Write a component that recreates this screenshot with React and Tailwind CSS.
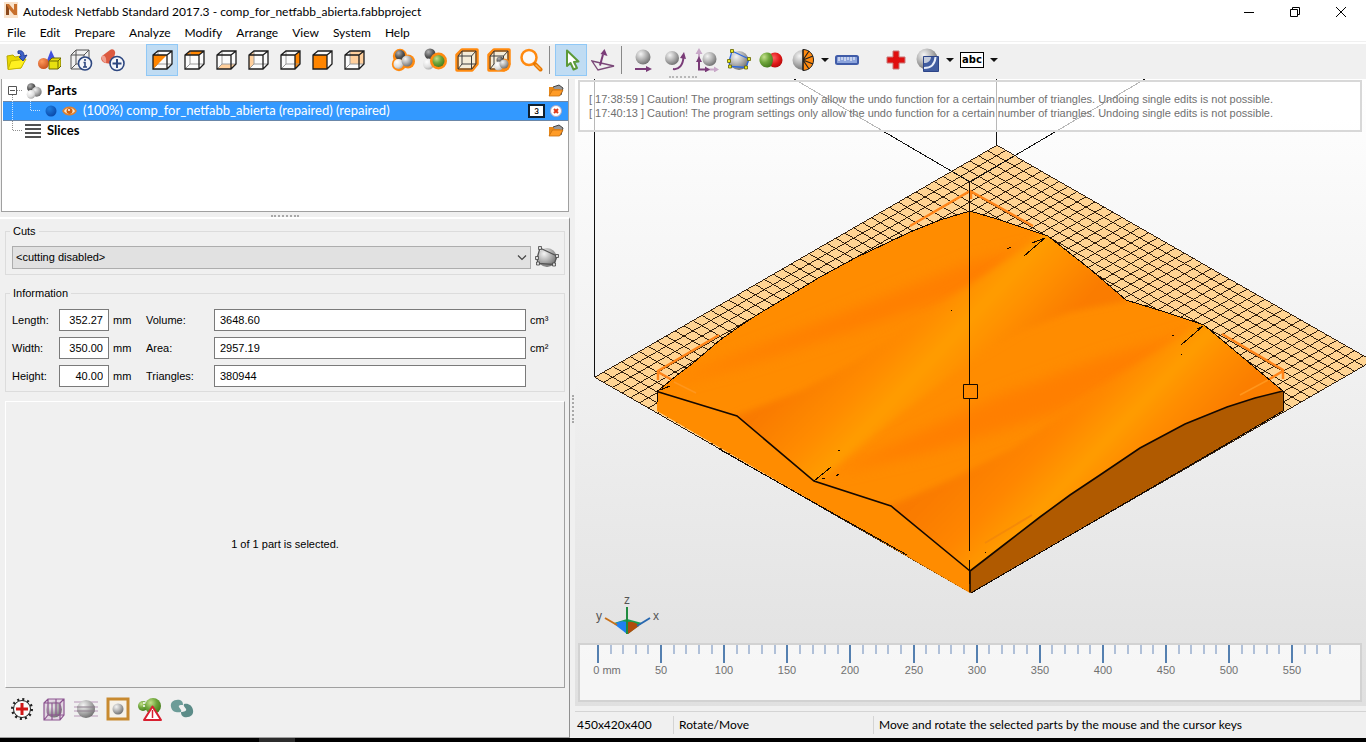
import { useState } from "react";

const menus = ["File", "Edit", "Prepare", "Analyze", "Modify", "Arrange", "View", "System", "Help"];

const messages = [
  "[ 17:38:59 ] Caution! The program settings only allow the undo function for a certain number of triangles. Undoing single edits is not possible.",
  "[ 17:40:13 ] Caution! The program settings only allow the undo function for a certain number of triangles. Undoing single edits is not possible.",
];

// gradients shared by all the icons
function IconDefs() {
  return (
    <svg className="absolute w-0 h-0" aria-hidden="true">
      <defs>
        <radialGradient id="ball" cx="0.35" cy="0.3" r="0.75">
          <stop offset="0" stopColor="#f4f4f4" />
          <stop offset="0.5" stopColor="#b4b4b4" />
          <stop offset="1" stopColor="#6e6e6e" />
        </radialGradient>
        <radialGradient id="ballDark" cx="0.35" cy="0.3" r="0.75">
          <stop offset="0" stopColor="#b0b0b0" />
          <stop offset="0.6" stopColor="#555" />
          <stop offset="1" stopColor="#333" />
        </radialGradient>
        <radialGradient id="ballLight" cx="0.35" cy="0.3" r="0.8">
          <stop offset="0" stopColor="#fff" />
          <stop offset="0.6" stopColor="#dedede" />
          <stop offset="1" stopColor="#a0a0a0" />
        </radialGradient>
        <radialGradient id="ballGreen" cx="0.35" cy="0.3" r="0.75">
          <stop offset="0" stopColor="#c4e08c" />
          <stop offset="0.5" stopColor="#6fa63c" />
          <stop offset="1" stopColor="#447a1c" />
        </radialGradient>
        <radialGradient id="ballRed" cx="0.4" cy="0.35" r="0.7">
          <stop offset="0" stopColor="#ff6060" />
          <stop offset="0.6" stopColor="#e01818" />
          <stop offset="1" stopColor="#b00808" />
        </radialGradient>
        <radialGradient id="ballOrange" cx="0.35" cy="0.3" r="0.75">
          <stop offset="0" stopColor="#ff9a5c" />
          <stop offset="1" stopColor="#c8501c" />
        </radialGradient>
        <radialGradient id="ballBlue" cx="0.35" cy="0.3" r="0.75">
          <stop offset="0" stopColor="#1f7ee0" />
          <stop offset="1" stopColor="#0a48a8" />
        </radialGradient>
      </defs>
    </svg>
  );
}

function Icon({ children, className = "w-6 h-6" }) {
  return (
    <svg viewBox="0 0 24 24" className={className} fill="none" aria-hidden="true">
      {children}
    </svg>
  );
}

const cubeFaces = {
  half: <path d="M3 7h14l-14 14z" fill="#ff8500" />,
  top: <path d="M3 7l5-4h14l-5 4z" fill="#ff8500" />,
  bottom: <path d="M3 21l5-5h14l-5 5z" fill="#ffcf9c" />,
  left: <path d="M3 7l5-4v13l-5 5z" fill="#ffcf9c" />,
  right: <path d="M17 7l5-4v13l-5 5z" fill="#ff8500" />,
  front: <path d="M3 7h14v14H3z" fill="#ff8500" />,
  back: <path d="M8 3h14v13H8z" fill="#ffcf9c" />,
};

function Cube({ face }) {
  return (
    <Icon>
      <path d="M3 7l5-4h14v13l-5 5H3z" fill="#fbfbfb" />
      {face !== "front" && face !== "half" && cubeFaces[face]}
      {face !== "front" && <path d="M8 3v13h14M8 16l-5 5" stroke="#9a9a9a" />}
      {(face === "front" || face === "half") && cubeFaces[face]}
      <path d="M3 7l5-4h14v13l-5 5H3zM3 7h14v14M17 7l5-4" stroke="#1c1c1c" strokeWidth="1.300" />
    </Icon>
  );
}

function OpenIcon() {
  return (
    <Icon>
      <path d="M2 8l6-1 2 2 6-1v4l4-1-4 9-13 1z" fill="#e8d800" stroke="#b8a800" />
      <path d="M6 13l15-2-5 9-13 1.500z" fill="#fff020" stroke="#c8b800" />
      <path d="M13 3c4-1 6 1 6 5l3-1-4 6-4-4 2-.5c0-2-1-3.500-3-3z" fill="#3f62c8" stroke="#223c98" />
    </Icon>
  );
}

function ShapesIcon() {
  return (
    <Icon>
      <path d="M14 2l6 13H9z" fill="#4050e0" />
      <circle cx="6.500" cy="15.500" r="5.500" fill="url(#ballOrange)" />
      <path d="M12 13l3-3h9v8l-3 3h-9z" fill="#e8e010" stroke="#6c6800" />
      <path d="M12 13h9v8M21 13l3-3" stroke="#6c6800" />
    </Icon>
  );
}

function InfoBoxIcon() {
  return (
    <Icon>
      <path d="M2 7l5-5h13v14l-5 5H2zM7 2v14h13M7 16l-5 5M2 7h13v13M15 7l5-5" stroke="#555" />
      <circle cx="16" cy="15.500" r="6.500" fill="#f4f6fa" stroke="#2d4780" strokeWidth="1.600" />
      <path d="M16 11v2M14.500 14.500H16v4.500M14 19h4" stroke="#2d4780" strokeWidth="1.600" />
    </Icon>
  );
}

function AddPartIcon() {
  return (
    <Icon>
      <path d="M1 8l8-6c3-2 6 1 5 4l-3 10-7-1c-3-1-5-4-3-7z" fill="#dc5a40" />
      <path d="M1 8c2-2 5 1 4 7-3-1-5-4-4-7z" fill="#f0a090" />
      <circle cx="16" cy="15.500" r="7" fill="#f4f6fa" stroke="#2d4780" strokeWidth="1.600" />
      <path d="M16 11v9M11.500 15.500h9" stroke="#2d4780" strokeWidth="2" />
    </Icon>
  );
}

function AllPartsIcon() {
  return (
    <Icon>
      <g fill="#ff8a10">
        <circle cx="9" cy="8" r="7.200" />
        <circle cx="8" cy="16" r="7.200" />
        <circle cx="17" cy="13.500" r="7" />
      </g>
      <circle cx="9" cy="7" r="5" fill="url(#ballDark)" />
      <circle cx="7.500" cy="16" r="5" fill="url(#ballLight)" />
      <circle cx="16" cy="13" r="5.500" fill="url(#ball)" />
    </Icon>
  );
}

function OnePartIcon() {
  return (
    <Icon>
      <circle cx="7" cy="6" r="5.500" fill="url(#ballDark)" />
      <circle cx="5.500" cy="16" r="5.500" fill="url(#ballLight)" />
      <circle cx="15.500" cy="13" r="8.500" fill="#ff8a10" />
      <circle cx="15.500" cy="13" r="6" fill="url(#ballGreen)" />
    </Icon>
  );
}

function FitBoxIcon({ ball }) {
  return (
    <Icon>
      <path d="M2 7l5-5h15v14l-5 6H2z" stroke="#ff8a10" strokeWidth="3.500" strokeLinejoin="round" fill="#f4ecd8" />
      <path d="M3 8l4-5h14v13l-4 5H3zM3 8h13.500v13M16.500 8l4.500-5M7 3v13h14M7 16l-4 5" stroke="#3c3c3c" />
      {ball && (
        <>
          <circle cx="17" cy="17" r="6.500" fill="#ff8a10" />
          <circle cx="13" cy="12" r="3.500" fill="url(#ballDark)" />
          <circle cx="11.500" cy="18" r="4.500" fill="url(#ballLight)" />
          <circle cx="17" cy="16" r="4.500" fill="url(#ball)" />
        </>
      )}
    </Icon>
  );
}

function SearchIcon() {
  return (
    <Icon>
      <circle cx="10" cy="9.500" r="7.500" stroke="#ff8a10" strokeWidth="2.500" fill="#fafafa" />
      <path d="M16 16l5.500 5.500" stroke="#e87800" strokeWidth="4" strokeLinecap="round" />
      <path d="M17 17l4 4" stroke="#ffb050" strokeWidth="1.500" strokeLinecap="round" />
    </Icon>
  );
}

function PointerIcon() {
  return (
    <Icon>
      <path d="M8 2.500v15.500l3.500-3 3 6.500 3.500-1.500-3-6 4.500-.5z" fill="#fff" stroke="#5c9a38" strokeWidth="2" strokeLinejoin="round" />
    </Icon>
  );
}

function AlignIcon() {
  return (
    <Icon>
      <path d="M1 13l22 5-16 4z" stroke="#7a4878" strokeWidth="1.300" />
      <path d="M9 17.500l3-11" stroke="#7a3c78" strokeWidth="2" />
      <path d="M13.500 1l3 7-7-2z" fill="#7a3c78" />
    </Icon>
  );
}

function MoveIcon() {
  return (
    <Icon>
      <circle cx="12" cy="9" r="7.500" fill="url(#ball)" />
      <path d="M4 21h13" stroke="#7a3c78" strokeWidth="2" />
      <path d="M15 18l6 3-6 3z" fill="#7a3c78" />
    </Icon>
  );
}

function RotateIcon() {
  return (
    <Icon>
      <circle cx="9" cy="10" r="7" fill="url(#ball)" />
      <path d="M10 21c6 1 10-4 10.500-12" stroke="#7a3c78" strokeWidth="2" />
      <path d="M17 10l4-6 2 7z" fill="#7a3c78" />
    </Icon>
  );
}

function ScaleIcon() {
  return (
    <Icon>
      <path d="M4 4v8M12 21.500h8" stroke="#c8a8c8" strokeWidth="2" />
      <path d="M4 0l3.500 6h-7zM24 21.500l-5-3v6z" fill="#c8a8c8" />
      <circle cx="14.500" cy="11" r="7" fill="url(#ball)" />
      <path d="M4 11v10.500h8" stroke="#7a3c78" strokeWidth="2" />
      <path d="M4 8l3 6H1zM15 21.500l-5-3v6z" fill="#7a3c78" />
    </Icon>
  );
}

function CutIcon({ muted }) {
  const line = muted ? "#555" : "#2a68e0";
  const dot = muted ? "#ddd" : "#e8e820";
  return (
    <Icon>
      <circle cx="12" cy="12.500" r="9.500" fill="url(#ball)" />
      <path d="M5 3l17 8-3 8.500-16-1-1-5z" stroke={line} strokeWidth="1.300" />
      <g fill={dot} stroke={muted ? "#444" : "#606000"} strokeWidth="0.800">
        <path d="M3.500 1.500h3v3h-3zM20.500 9.500h3v3h-3zM17.500 18h3v3h-3zM1.500 17h3v3h-3zM.5 11.500h3v3h-3z" />
      </g>
    </Icon>
  );
}

function BooleanIcon() {
  return (
    <Icon>
      <circle cx="16" cy="12" r="7.500" fill="url(#ballRed)" />
      <path d="M8 4.500a7.500 7.500 0 1 0 4 13.800 12 12 0 0 0 0-12.600 7.500 7.500 0 0 0-4-1.200z" fill="url(#ballGreen)" />
    </Icon>
  );
}

function RepairMeshIcon() {
  return (
    <Icon>
      <circle cx="11.500" cy="12" r="10" fill="url(#ball)" />
      <path d="M12 1.500c6 0 10.500 4.500 10.500 10.500S18 22.500 12 22.500z" fill="#ff8a10" stroke="#222" />
      <path d="M12 12l6-9M12 12l10-4M12 12l10 4M12 12l6 9M12 1.500v21" stroke="#222" strokeWidth="1.200" />
    </Icon>
  );
}

function RulerIcon() {
  return (
    <Icon>
      <rect x="1" y="8" width="22" height="8" rx="1.500" fill="#8ca4dc" stroke="#405ca8" strokeWidth="2" />
      <path d="M4 9v4M7 9v3M10 9v4M13 9v3M16 9v4M19 9v3" stroke="#fff" />
    </Icon>
  );
}

function PlusIcon() {
  return (
    <Icon>
      <path d="M9 3h6v6h6v6h-6v6H9v-6H3V9h6z" fill="#e01010" stroke="#c87878" />
    </Icon>
  );
}

function OffsetIcon() {
  return (
    <Icon>
      <circle cx="11" cy="11" r="10.500" fill="url(#ball)" />
      <path d="M7.500 8.500h15v15h-15z" fill="#405ca0" stroke="#2c4488" />
      <path d="M8 20c7 0 11-4 11.500-11" stroke="#e8eefa" strokeWidth="2" />
      <path d="M8 9h7c-.5 4-3 6-7 6z" fill="#c4ccdc" />
    </Icon>
  );
}

function SupportIcon() {
  return (
    <Icon className="w-4 h-4">
      <circle cx="8" cy="7" r="6.500" fill="url(#ballDark)" />
      <circle cx="16" cy="13" r="7.500" fill="url(#ball)" />
      <circle cx="7.500" cy="17" r="6.500" fill="url(#ballLight)" />
    </Icon>
  );
}

function FolderIcon() {
  return (
    <svg viewBox="0 0 16 14" className="w-4 h-[14px]" aria-hidden="true">
      <path d="M5 3l6-2 4 3-2 7-6-3z" fill="#999" stroke="#444" />
      <path d="M1 3h4l1.500 2H12v7H1z" fill="#e88818" />
      <path d="M1 12l3.500-6H15l-3.500 6z" fill="#ff9c28" stroke="#c87010" strokeWidth="0.800" />
    </svg>
  );
}

function Drop({ label }) {
  return (
    <button type="button" aria-label={label} className="w-3 h-8 flex items-center justify-center">
      <svg viewBox="0 0 8 4" className="w-2 h-1" aria-hidden="true">
        <path d="M0 0h8L4 4z" fill="#111" />
      </svg>
    </button>
  );
}

function Tool({ label, active, onClick, children }) {
  return (
    <button
      type="button"
      aria-label={label}
      onClick={onClick}
      className={
        "w-8 h-8 shrink-0 flex items-center justify-center border " +
        (active ? "bg-[#c0dcf3] border-[#90c8f6]" : "border-transparent")
      }
    >
      {children}
    </button>
  );
}

function Toolbar() {
  const [view, setView] = useState("half");
  const [tool, setTool] = useState("pointer");

  return (
    <div className="h-[37px] shrink-0 flex items-center bg-[#f0f0f0] border-t-2 border-white pl-px pb-1">
      <Tool label="Open"><OpenIcon /></Tool>
      <Tool label="Add primitives"><ShapesIcon /></Tool>
      <Tool label="Platform info"><InfoBoxIcon /></Tool>
      <Tool label="Add part"><AddPartIcon /></Tool>

      <div className="flex mx-[17px]">
        {Object.keys(cubeFaces).map((face) => (
          <Tool key={face} label={"View " + face} active={view === face} onClick={() => setView(face)}>
            <Cube face={face} />
          </Tool>
        ))}
      </div>

      <Tool label="Zoom to all"><AllPartsIcon /></Tool>
      <Tool label="Zoom to selected"><OnePartIcon /></Tool>
      <Tool label="Zoom to platform"><FitBoxIcon /></Tool>
      <Tool label="Zoom to platform and parts"><FitBoxIcon ball /></Tool>
      <Tool label="Zoom"><SearchIcon /></Tool>

      <div className="w-px h-7 ml-[2px] mr-[5px] bg-[#888]" />
      <Tool label="Select" active={tool === "pointer"} onClick={() => setTool("pointer")}><PointerIcon /></Tool>
      <Tool label="Align" active={tool === "align"} onClick={() => setTool("align")}><AlignIcon /></Tool>
      <div className="w-px h-7 ml-[2px] mr-[5px] bg-[#888]" />

      <Tool label="Move"><MoveIcon /></Tool>
      <div className="relative">
        <Tool label="Rotate"><RotateIcon /></Tool>
        <div className="absolute left-[10px] top-full w-7 border-t-2 border-dotted border-[#b8b8b8]" />
      </div>
      <Tool label="Scale"><ScaleIcon /></Tool>
      <Tool label="Free cut"><CutIcon /></Tool>
      <Tool label="Boolean"><BooleanIcon /></Tool>
      <Tool label="Mesh"><RepairMeshIcon /></Tool>
      <Drop label="Mesh options" />
      <Tool label="Measure"><RulerIcon /></Tool>
      <div className="w-[17px]" />
      <Tool label="Repair"><PlusIcon /></Tool>
      <Tool label="Shell"><OffsetIcon /></Tool>
      <Drop label="Shell options" />
      <button type="button" className="w-6 h-4 mx-1 flex items-center justify-center border border-black bg-white font-['DejaVu_Sans'] text-[10px] leading-3 font-bold">
        abc
      </button>
      <Drop label="Label options" />
    </div>
  );
}

function TitleBar() {
  return (
    <header className="shrink-0 h-[22px] flex items-center pl-1 pt-px text-[12px]">
      <svg viewBox="0 0 14 16" className="w-[14px] h-4 mr-[5px] mb-1" aria-hidden="true">
        <path d="M0 0h14v16H0z" fill="#f9e3cc" />
        <path d="M2 13V2h3l5 6V2h3v11h-3L5 7v6z" fill="#c8702c" />
        <path d="M2 13V2l3 5v6z" fill="#8c4a1c" />
      </svg>
      <h1 className="grow whitespace-nowrap">Autodesk Netfabb Standard 2017.3 - comp_for_netfabb_abierta.fabbproject</h1>
      <button type="button" aria-label="Minimize" className="w-[46px] h-full flex items-center justify-center">
        <svg viewBox="0 0 10 10" className="w-[10px] h-[10px]"><path d="M0 5.500h10" stroke="#000" /></svg>
      </button>
      <button type="button" aria-label="Restore" className="w-[46px] h-full flex items-center justify-center">
        <svg viewBox="0 0 10 10" className="w-[10px] h-[10px]" fill="none">
          <path d="M.5 2.500h7v7h-7zM2.500 2.500v-2h7v7h-2" stroke="#000" />
        </svg>
      </button>
      <button type="button" aria-label="Close" className="w-[46px] h-full mr-[2px] flex items-center justify-center">
        <svg viewBox="0 0 10 10" className="w-[10px] h-[10px]"><path d="M0 0l10 10M10 0L0 10" stroke="#000" /></svg>
      </button>
    </header>
  );
}

function PartsTree() {
  return (
    <div className="h-[133px] shrink-0 mx-px bg-white border-l border-b border-r border-[#a0a0a0] pt-[2px] text-[13px]">
      <div className="h-5 flex items-center pr-1">
        <svg viewBox="0 0 22 20" className="w-[22px] h-5 mr-[2px]" fill="none" aria-hidden="true">
          <path d="M10.500 14v6M15 9.500h5" stroke="#909090" strokeDasharray="1 1" />
          <path d="M6.500 5.500h8v8h-8zM8 9.500h5" stroke="#555" />
        </svg>
        <SupportIcon />
        <span className="grow ml-[5px] font-bold">Parts</span>
        <button type="button" aria-label="Open parts"><FolderIcon /></button>
      </div>

      <div className="h-5 flex items-center pr-1 ml-px bg-[#3399ff] border-y border-[#6b87a8] text-white">
        <svg viewBox="0 0 42 20" className="w-[42px] h-5" fill="none" aria-hidden="true">
          <path d="M9.500 0v20M27.500 0v9.500h10" stroke="#cfe4fa" strokeDasharray="1 1" />
        </svg>
        <svg viewBox="0 0 32 12" className="w-8 h-3" fill="none" aria-hidden="true">
          <circle cx="6" cy="6" r="5.500" fill="url(#ballBlue)" />
          <path d="M18 6c3-5 10-5 13 0-3 5-10 5-13 0z" fill="#ffe8c8" stroke="#e08030" strokeWidth="1.500" />
          <circle cx="24.500" cy="6" r="3" fill="#d06010" />
          <circle cx="24" cy="5" r="1" fill="#fff" />
        </svg>
        <span className="grow ml-[6px] whitespace-nowrap">(100%) comp_for_netfabb_abierta (repaired) (repaired)</span>
        <span className="w-[17px] h-[14px] mr-[3px] border-2 border-[#102030] bg-white text-black text-[8px] leading-[10px] text-center font-bold">3</span>
        <button type="button" aria-label="Remove part" className="w-4 flex justify-center">
          <svg viewBox="0 0 12 12" className="w-3 h-3" aria-hidden="true">
            <circle cx="6" cy="6" r="5.500" fill="#fff" stroke="#b0a8c0" />
            <path d="M4 4l4 4M8 4L4 8" stroke="#e03818" strokeWidth="2" />
          </svg>
        </button>
      </div>

      <div className="h-5 flex items-center pr-1">
        <svg viewBox="0 0 22 20" className="w-[22px] h-5 mr-px" fill="none" aria-hidden="true">
          <path d="M10.500 0v9.500h10" stroke="#909090" strokeDasharray="1 1" />
        </svg>
        <svg viewBox="0 0 16 14" className="w-4 h-[14px]" shapeRendering="crispEdges" aria-hidden="true">
          <path d="M0 1h16M0 5h16M0 9h16M0 13h16" stroke="#505050" strokeWidth="2" />
        </svg>
        <span className="grow ml-[6px] font-bold">Slices</span>
        <button type="button" aria-label="Open slices"><FolderIcon /></button>
      </div>
    </div>
  );
}

const rows = [
  { id: "length", label: "Length:", value: "352.27", id2: "volume", label2: "Volume:", value2: "3648.60", unit: "cm³" },
  { id: "width", label: "Width:", value: "350.00", id2: "area", label2: "Area:", value2: "2957.19", unit: "cm²" },
  { id: "height", label: "Height:", value: "40.00", id2: "triangles", label2: "Triangles:", value2: "380944", unit: "" },
];

function InfoPanel() {
  const field = "h-[22px] border border-[#7a7a7a] bg-white px-[5px] text-[11px]";
  return (
    <div className="grow flex flex-col border-t-2 border-t-white border-r border-r-[#909090] pl-[5px] pr-1 pb-1 font-['Liberation_Sans',Arial,sans-serif] text-[11px]">
      <fieldset className="mt-[5px] h-[51px] border border-[#dcdcdc] px-[6px]">
        <legend className="ml-[-2px] px-[3px] leading-[14px]">Cuts</legend>
        <div className="flex items-center mt-[7px]">
          <div className="grow relative">
            <select aria-label="Cuts" className="w-full h-[23px] appearance-none border border-[#adadad] bg-[#e1e1e1] pl-[3px]">
              <option>&lt;cutting disabled&gt;</option>
            </select>
            <svg viewBox="0 0 10 6" className="absolute right-[4px] top-[9px] w-[10px] h-[6px] pointer-events-none" fill="none">
              <path d="M1 .5l4 4 4-4" stroke="#444" strokeWidth="1.200" />
            </svg>
          </div>
          <button type="button" aria-label="Edit cut" className="ml-1 mr-[-1px]"><CutIcon muted /></button>
        </div>
      </fieldset>

      <fieldset className="mt-[11px] h-[106px] border border-[#dcdcdc] pl-[6px] pr-[38px]">
        <legend className="ml-[-2px] px-[3px] leading-[14px]">Information</legend>
        <div className="mt-[9px] flex flex-col gap-[6px]">
          {rows.map((r) => (
            <div key={r.id} className="flex items-center">
              <label htmlFor={r.id} className="w-[47px]">{r.label}</label>
              <input id={r.id} readOnly value={r.value} className={field + " w-[50px] text-right"} />
              <span className="w-[37px] pl-1">mm</span>
              <label htmlFor={r.id2} className="w-[68px]">{r.label2}</label>
              <input id={r.id2} readOnly value={r.value2} className={field + " grow"} />
              <span className="w-[22px] pl-1 mr-[-22px]">{r.unit}</span>
            </div>
          ))}
        </div>
      </fieldset>

      <div className="grow mt-[9px] flex items-center justify-center border border-white border-r-[#a0a0a0] border-b-[#a0a0a0]">
        1 of 1 part is selected.
      </div>

      <div className="h-[45px] shrink-0 flex items-center gap-2 pl-[5px] pb-1">
        <button type="button" aria-label="Repair"><Icon>
          <circle cx="12" cy="12" r="9.500" stroke="#222" strokeWidth="3" strokeDasharray="2 2.970" />
          <circle cx="12" cy="12" r="8.500" stroke="#222" fill="#fafafa" />
          <path d="M12 6v12M6 12h12" stroke="#d01818" strokeWidth="3" />
        </Icon></button>
        <button type="button" aria-label="Bounding box"><Icon>
          <path d="M2 6l4-4h16v16l-4 5H2z" fill="#e2d6e2" />
          <circle cx="12" cy="12.500" r="8" fill="url(#ball)" />
          <path d="M2 6l4-4h16v16l-4 5H2zM2 6h16v17M18 6l4-4M6 2v16h16M6 18l-4 5M10 6v17M14 2v16" stroke="#8c5490" strokeWidth="1.200" />
        </Icon></button>
        <button type="button" aria-label="Slices"><Icon>
          <path d="M0 5h24M0 10h24M0 14h24M0 19h24" stroke="#b898b8" />
          <circle cx="12" cy="12" r="9" fill="url(#ball)" />
          <path d="M3 10h18M3 14h18" stroke="#8a7c8a" />
        </Icon></button>
        <button type="button" aria-label="Platform"><Icon>
          <path d="M2 2h20v20H2z" stroke="#c88a30" strokeWidth="3" fill="#f6f2ea" />
          <circle cx="12" cy="12" r="5.500" fill="url(#ball)" />
        </Icon></button>
        <button type="button" aria-label="Collisions"><Icon>
          <circle cx="5" cy="9" r="5" fill="url(#ballGreen)" />
          <path d="M5 6h4M5 9h3" stroke="#fff" strokeWidth="1.500" />
          <circle cx="15" cy="9" r="8" fill="url(#ballGreen)" />
          <path d="M14.500 9.500L23 23H6z" fill="#fff" stroke="#d82030" strokeWidth="2" strokeLinejoin="round" />
          <path d="M14.500 13v8" stroke="#d82030" strokeWidth="1.500" />
        </Icon></button>
        <button type="button" aria-label="Link"><Icon>
          <path d="M10 3C4 2 0 5 1 10s6 6 10 5c1-2-1-3-2-5s2-2 4-2c0-3-1-4-3-5z" fill="#6c9c98" />
          <path d="M14 20c6 1 10-2 9-7s-5-7-9-6c-1 2 1 3 2 5s-2 3-5 3c0 3 1 4 3 5z" fill="#5c8c88" />
        </Icon></button>
      </div>
    </div>
  );
}

// build platform: 45 x 42 cells, top corner is the origin
const top = [996.5, 145.5];
const u = [-8.93, 5.15];
const v = [8.95, 5.13];
const at = (a, b) => `${top[0] + u[0] * a + v[0] * b} ${top[1] + u[1] * a + v[1] * b}`;
const gridLines = [];
for (let i = 0; i <= 45; i++) gridLines.push(`M${at(i, 0)}L${at(i, 42)}`);
for (let j = 0; j <= 42; j++) gridLines.push(`M${at(0, j)}L${at(45, j)}`);

const backEdge =
  "M657 391.500L676 376L693 363L720 340L740 326L760 313L787 297L820 277L857 257L887 243L910 232L940 220L970 211L997 219L1048 236L1090 269L1126 300L1165 312L1204 325L1283 391";
const frontEdge = "L1255 398L1227 407L1185 424L1140 448L1100 475L1070 495L1040 517L1005 544L970 571";
const surface = backEdge + frontEdge + "L891 506L814 481L737 416Z";

function Scene() {
  return (
    <svg viewBox="575 79 791 627" preserveAspectRatio="xMinYMin slice" className="absolute inset-0 w-full h-full" fill="none" role="img" aria-label="Platform with part">
      <defs>
        <clipPath id="surface"><path d={surface} /></clipPath>
        <filter id="soft" x="-20%" y="-20%" width="140%" height="140%"><feGaussianBlur stdDeviation="7" /></filter>
        <filter id="softer" x="-20%" y="-20%" width="140%" height="140%"><feGaussianBlur stdDeviation="3" /></filter>
        <linearGradient id="fold1" gradientUnits="userSpaceOnUse" x1="868" y1="298" x2="984" y2="408">
          <stop offset="0" stopColor="#f97a00" />
          <stop offset="0.350" stopColor="#ff8c00" />
          <stop offset="0.550" stopColor="#ff9c00" />
          <stop offset="0.720" stopColor="#ff9000" />
          <stop offset="1" stopColor="#fa7b00" />
        </linearGradient>
        <linearGradient id="fold2" gradientUnits="userSpaceOnUse" x1="1024" y1="388" x2="1140" y2="498">
          <stop offset="0" stopColor="#f97a00" />
          <stop offset="0.350" stopColor="#ff8600" />
          <stop offset="0.600" stopColor="#ff9c00" />
          <stop offset="0.750" stopColor="#ff8e00" />
          <stop offset="1" stopColor="#fb7e00" />
        </linearGradient>
      </defs>

      <path d={`M${at(0, 0)}L${at(45, 0)}L${at(45, 42)}L${at(0, 42)}Z`} fill="#ffd493" />
      <path d={gridLines.join("")} stroke="#1c0c00" strokeWidth="0.900" shapeRendering="crispEdges" />
      <path d="M594.500 79V377M996.500 79V145M794 79L970 182L1145 79" stroke="#111" shapeRendering="crispEdges" />

      <g stroke="#ff8418" strokeWidth="2.500">
        <path d="M910 226L970 191L1033 226M971 191v8" />
        <path d="M719 335L658 371v9M658 372l16 9" />
        <path d="M1222 334L1283 370v9M1283 371l-15 9" />
      </g>

      <path d={surface} fill="#ff8c00" />
      <g clipPath="url(#surface)">
        <g filter="url(#soft)">
          <path d="M1048 244L970 262L850 310L655 388L740 366L860 328L985 286Z" fill="#ff7f00" />
          <path d="M1200 330L1100 358L1000 395L830 474L930 452L1060 412Z" fill="#ff7f00" />
        </g>
        <g filter="url(#softer)">
          <path d="M730 418L803 390L853 363L903 330L970 285L1048 230L1130 300L1070 312L1020 332L970 362L900 414L812 486Z" fill="url(#fold1)" />
          <path d="M885 508L950 480L1010 450L1090 396L1204 320L1290 391L1185 435L1040 530L970 580Z" fill="url(#fold2)" />
        </g>
        <path d="M1032 515L985 543" stroke="#f58a08" strokeWidth="2" />
        <path d="M674 382l22 11M1268 380l-28 15" stroke="#ff961c" strokeWidth="1.500" />
      </g>

      <path d="M657 391.500L737 416L814 481L891 506L970 571V593L657 411Z" fill="#ff8c00" />
      <path d={"M1283 391" + frontEdge + "V593L1283 411Z"} fill="#b05a00" />

      <g stroke="#140800" shapeRendering="crispEdges">
        <path d={backEdge + "V411"} />
        <path d="M657.500 391v11M719 449L907 555M971 593L1283 411" />
        <path d="M969.500 182V551M969.500 560V584" />
        <path d="M1045 238L1024 256M1045 238l-13 5M1011 247l-4 2M1203 326L1181 345M1203 326l-6 3M814 481L831 467M822 479l3-1M836 476l3-2M838 451l2-1M660 390l10-4M951 310h1M1172 335h2M1181 354h1M985 552h1" />
      </g>
      <path d={"M657 391.500L737 416L814 481L891 506L970 571M1283 391" + frontEdge + "V592"} stroke="#140800" strokeWidth="1.600" />
      <path d="M963.500 384.500h14v14h-14z" stroke="#140800" fill="#ff8a00" />

      {/* axis cross */}
      <path d="M614 623l13-4 15 4-14 11z" fill="#18a050" />
      <path d="M614 624q6-4 13-2v12z" fill="#2080f0" />
      <path d="M627 622q8-1 12 4l-11 8z" fill="#b04c0c" />
      <path d="M627 607V634" stroke="#208c40" strokeWidth="2" />
      <path d="M605 618l12 7" stroke="#c87018" strokeWidth="2" />
      <path d="M650 618l-13 8" stroke="#2868b0" strokeWidth="2" />
      <g fill="#555" className="font-['Liberation_Sans',Arial,sans-serif] text-[12px]" textAnchor="middle">
        <text x="627" y="604">z</text>
        <text x="599" y="620">y</text>
        <text x="656" y="620">x</text>
      </g>
    </svg>
  );
}

function Ruler() {
  const ticks = Array.from({ length: 59 }, (_, i) => i);
  return (
    <div className="absolute left-[3px] right-1 bottom-1 h-[59px] border-2 border-[#d2d2d2] bg-white/70 overflow-hidden">
      <svg className="w-full h-full" shapeRendering="crispEdges" role="img" aria-label="Scale in millimetres">
        {ticks.map((i) => {
          const x = Math.round(18 + i * 12.62);
          return i % 5 === 0 ? (
            <path key={i} d={`M${x} 0v18`} stroke="#5580b0" strokeWidth="2" />
          ) : (
            <path key={i} d={`M${x} 0v9`} stroke="#b0c0d8" strokeWidth="2" />
          );
        })}
        <g fill="#707070" textAnchor="middle" className="font-['Liberation_Sans',Arial,sans-serif] text-[11px]">
          {ticks.filter((i) => i % 5 === 0).map((i) => (
            <text key={i} x={i === 0 ? 27 : Math.round(18 + i * 12.62)} y="29">
              {i === 0 ? "0 mm" : i * 10}
            </text>
          ))}
        </g>
      </svg>
    </div>
  );
}

export default function App() {
  return (
    <div className="h-screen flex flex-col overflow-hidden bg-white text-black font-['Lato','Open_Sans',sans-serif]">
      <IconDefs />
      <TitleBar />

      <nav className="shrink-0 h-[20px] flex items-center gap-[14px] pl-[7px] pt-[2px] text-[12px] border-b border-[#f0f0f0]">
        {menus.map((m) => (
          <button key={m} type="button">{m}</button>
        ))}
      </nav>

      <Toolbar />

      <div className="grow min-h-0 flex bg-[#f0f0f0]">
        <aside className="w-[570px] shrink-0 flex flex-col border-b border-[#a0a0a0]">
          <PartsTree />
          <div className="h-[5px] shrink-0 flex items-end justify-center">
            <div className="w-7 border-t-2 border-dotted border-[#a8a8a8]" />
          </div>
          <InfoPanel />
        </aside>

        <div className="w-[5px] shrink-0 flex items-center justify-center">
          <div className="h-7 border-l-2 border-dotted border-[#a8a8a8]" />
        </div>

        <main className="grow min-w-0 flex flex-col">
          <div className="grow relative bg-linear-to-b from-white to-[#e0e0e0]">
            <Scene />
            <div className="absolute left-[3px] right-1 top-px h-[52px] border-2 border-[#d8d8d8] bg-white/70 pl-[9px] pt-[10px] font-['Liberation_Sans',Arial,sans-serif] text-[11px] leading-[14px] text-[#707070] whitespace-nowrap">
              {messages.map((m) => (
                <p key={m}>{m}</p>
              ))}
            </div>
            <Ruler />
          </div>

          <footer className="shrink-0 h-[32px] pt-[5px] text-[12px]">
            <div className="h-[27px] flex items-center border-t border-[#d4d4d4] pb-px">
              <span className="w-[99px] pl-[2px] border-r border-[#d4d4d4]">450x420x400</span>
              <span className="w-[200px] pl-[5px] border-r border-[#d4d4d4]">Rotate/Move</span>
              <span className="pl-[5px] whitespace-nowrap">Move and rotate the selected parts by the mouse and the cursor keys</span>
            </div>
          </footer>
        </main>
      </div>

      <div className="h-1 shrink-0 bg-black pl-[259px]">
        <div className="w-9 h-1 bg-[#2c2c2c]" />
      </div>
    </div>
  );
}
